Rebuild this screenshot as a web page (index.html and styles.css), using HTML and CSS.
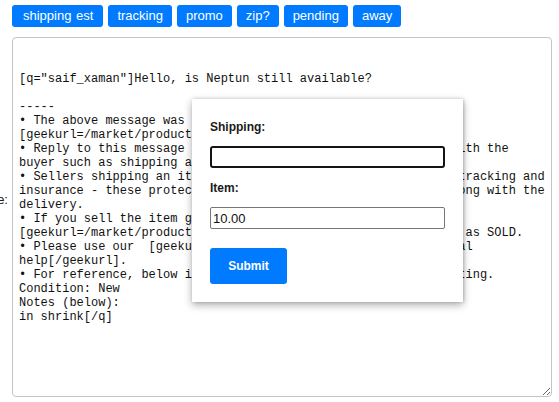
FILE: index.html
```html
<!DOCTYPE html>
<html lang="en">
<head>
<meta charset="utf-8">
<title>Reply</title>
<link rel="stylesheet" href="styles.css">
</head>
<body>
<div class="page">
  <div class="toolbar">
    <button class="tpl-btn tpl-btn-wide" type="button">shipping est</button>
    <button class="tpl-btn" type="button">tracking</button>
    <button class="tpl-btn" type="button">promo</button>
    <button class="tpl-btn" type="button">zip?</button>
    <button class="tpl-btn" type="button">pending</button>
    <button class="tpl-btn" type="button">away</button>
  </div>
  <div class="editor">
    <label class="side-label" for="msg">Message:</label>
    <textarea id="msg" class="message" spellcheck="false">


[q="saif_xaman"]Hello, is Neptun still available?

-----
• The above message was sent regarding the GeekMarket product: [geekurl=/market/product/2845871]Neptun[/geekurl]
• Reply to this message to coordinate any remaining details with the buyer such as shipping address and any other relevant details.
• Sellers shipping an item are highly encouraged to purchase tracking and insurance - these protections help you when something goes wrong with the delivery.
• If you sell the item go to [geekurl=/market/product/2845871]Neptun[/geekurl] and mark it as SOLD.
• Please use our  [geekurl=/wiki/page/GeekMarket_Guides]general help[/geekurl].
• For reference, below is the condition and notes for the listing.
Condition: New
Notes (below):
in shrink[/q]</textarea>
    <div class="modal">
      <label class="field-label" for="ship">Shipping:</label>
      <input id="ship" class="field-input is-focused" type="text" value="">
      <label class="field-label" for="item">Item:</label>
      <input id="item" class="field-input" type="text" value="10.00">
      <button class="submit-btn" type="button">Submit</button>
    </div>
  </div>
</div>
</body>
</html>
```
FILE: styles.css
```css
* { box-sizing: border-box; }

html, body {
  margin: 0;
  padding: 0;
  background: #ffffff;
}

.page {
  padding: 5px 0 0 12px;
  font-family: "Liberation Sans", Arial, sans-serif;
}

.toolbar {
  display: flex;
  gap: 5px;
}

.tpl-btn {
  font-family: "Liberation Sans", Arial, sans-serif;
  font-size: 13px;
  line-height: 16px;
  padding: 3px 9px;
  height: 22px;
  color: #ffffff;
  background: #007bff;
  border: none;
  border-radius: 3px;
  cursor: pointer;
}

.tpl-btn-wide {
  padding: 3px 10px 3px 11px;
  word-spacing: 1px;
}

.editor {
  position: relative;
  margin-top: 10px;
  width: 540px;
}

.side-label {
  position: absolute;
  right: calc(100% + 4px);
  top: 155px;
  font-size: 13px;
  line-height: 16px;
  color: #222;
  white-space: nowrap;
}

.message {
  display: block;
  width: 540px;
  height: 360px;
  margin: 0;
  padding: 6px;
  border: 1px solid #c4c4c4;
  border-radius: 4px;
  font-family: "Liberation Mono", "Courier New", monospace;
  font-size: 12px;
  line-height: 14px;
  color: #111;
  background: #fff;
  outline: none;
}

.modal {
  position: absolute;
  left: 180px;
  top: 62px;
  width: 271px;
  height: 203px;
  padding: 18px;
  background: #ffffff;
  box-shadow: 0 3px 8px rgba(0, 0, 0, 0.32), 1px 0 3px rgba(0, 0, 0, 0.18);
  display: flex;
  flex-direction: column;
  align-items: flex-start;
}

.field-label {
  display: block;
  font-size: 12px;
  font-weight: bold;
  line-height: 21px;
  color: #1a1a1a;
  margin-bottom: 8px;
}

.field-input {
  display: block;
  width: 235px;
  height: 22px;
  margin: 0 0 10px 0;
  padding: 1px 2px;
  border: 1px solid #767676;
  border-radius: 2px;
  font-family: "Liberation Sans", Arial, sans-serif;
  font-size: 13px;
  color: #111;
  background: #fff;
  outline: none;
}

.field-input.is-focused {
  border: 2px solid #141414;
  border-radius: 3px;
}

.field-input + .submit-btn {
  margin-top: 9px;
}

.submit-btn {
  width: 77px;
  height: 36px;
  padding: 0;
  border: none;
  border-radius: 3px;
  background: #007bff;
  color: #fff;
  font-family: "Liberation Sans", Arial, sans-serif;
  font-size: 12px;
  font-weight: bold;
  cursor: pointer;
}
```
